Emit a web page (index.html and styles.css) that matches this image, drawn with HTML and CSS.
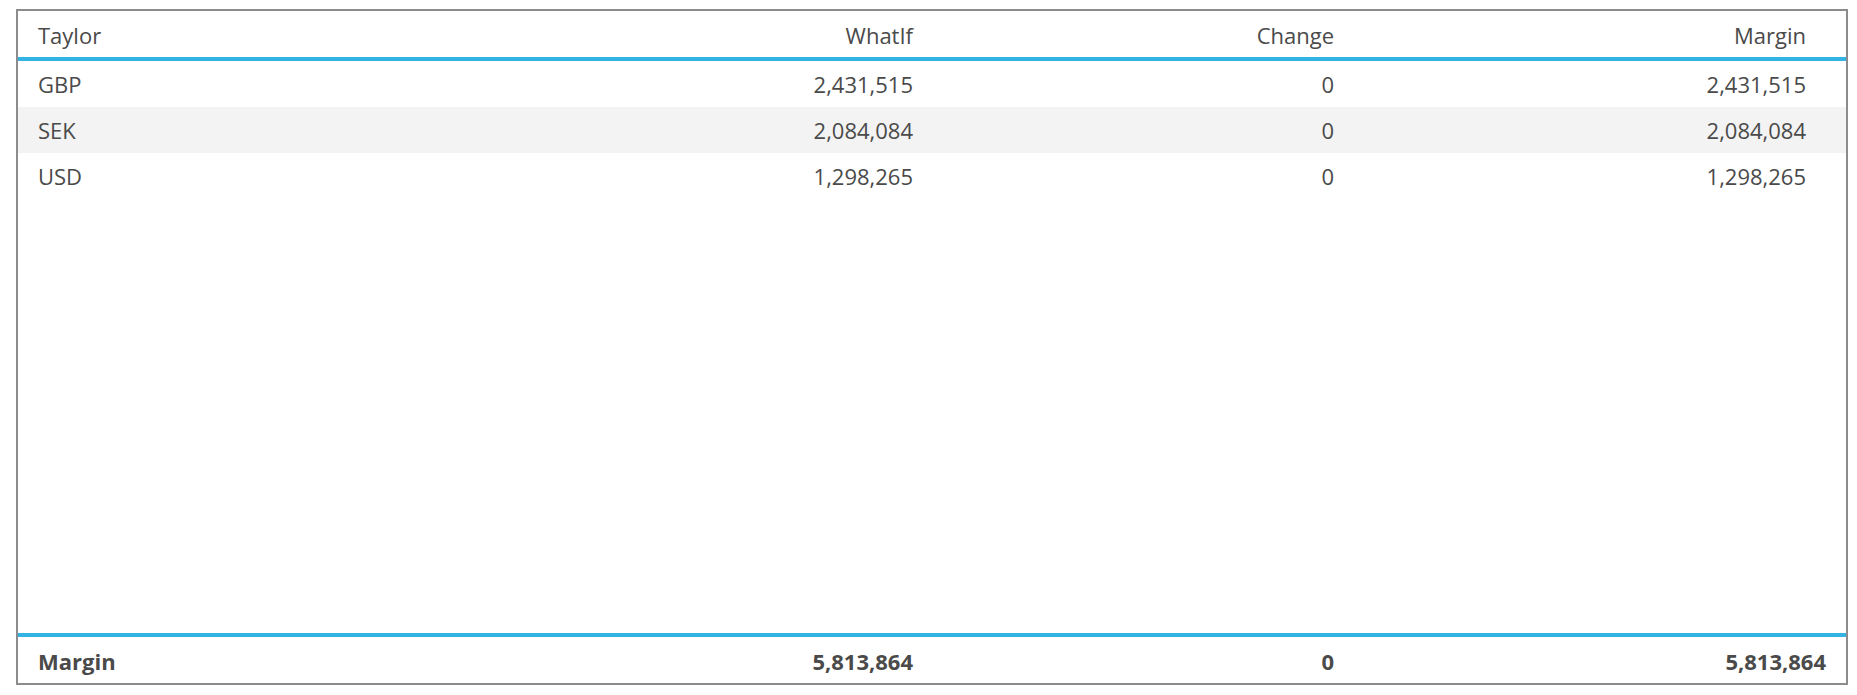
FILE: index.html
```html
<!DOCTYPE html>
<html lang="en">
<head>
<meta charset="utf-8">
<title>Taylor</title>
<link rel="stylesheet" href="styles.css">
</head>
<body>
<div class="panel">
  <div class="row head">
    <div class="cell left">Taylor</div>
    <div class="cell">WhatIf</div>
    <div class="cell">Change</div>
    <div class="cell">Margin</div>
  </div>
  <div class="rows">
    <div class="row data">
      <div class="cell left">GBP</div>
      <div class="cell">2,431,515</div>
      <div class="cell">0</div>
      <div class="cell">2,431,515</div>
    </div>
    <div class="row data alt">
      <div class="cell left">SEK</div>
      <div class="cell">2,084,084</div>
      <div class="cell">0</div>
      <div class="cell">2,084,084</div>
    </div>
    <div class="row data">
      <div class="cell left">USD</div>
      <div class="cell">1,298,265</div>
      <div class="cell">0</div>
      <div class="cell">1,298,265</div>
    </div>
  </div>
  <div class="row foot">
    <div class="cell left">Margin</div>
    <div class="cell">5,813,864</div>
    <div class="cell">0</div>
    <div class="cell">5,813,864</div>
  </div>
</div>
</body>
</html>
```

FILE: styles.css
```css
* { box-sizing: border-box; }

html, body {
  margin: 0;
  padding: 0;
  background: #ffffff;
}

body {
  font-family: "Open Sans", "Liberation Sans", sans-serif;
  font-size: 22px;
  color: #4a4a4a;
}

.panel {
  margin: 9px 9px 0 16px;
  height: 676px;
  border: 2px solid #8c8c8c;
  display: flex;
  flex-direction: column;
}

.row {
  display: grid;
  grid-template-columns: 496px 419px 421px 1fr;
  align-items: center;
}

.head {
  height: 50px;
  padding-right: 20px;
  padding-top: 1px;
  border-bottom: 4px solid #33b3e3;
}

.rows {
  flex: 1;
  display: flex;
  flex-direction: column;
}

.data {
  height: 46px;
  padding-right: 20px;
}

.alt {
  background: #f3f3f3;
}

.foot {
  height: 50px;
  border-top: 4px solid #33b3e3;
  font-weight: 700;
  padding-top: 2px;
}

.cell {
  text-align: right;
  padding: 0 20px;
  white-space: nowrap;
  line-height: 30px;
}

.cell.left {
  text-align: left;
}
```
